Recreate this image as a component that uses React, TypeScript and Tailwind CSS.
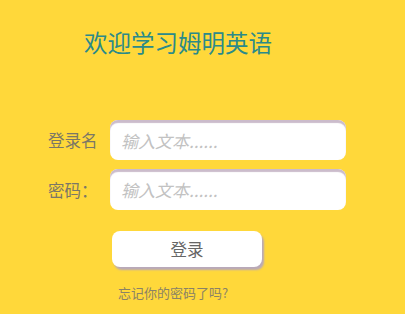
import React from 'react';

const font = { fontFamily: '"Noto Sans CJK SC", "Noto Sans", sans-serif' };

const inputCls =
  'w-[236px] shrink-0 rounded-[8px] bg-white pl-[11px] text-[17px] italic text-[#555] outline-none shadow-[inset_0_3px_1px_#cbbccb] placeholder:text-[#c2c2c2]';

export default function App() {
  return (
    <div className="h-[314px] w-[405px] overflow-hidden bg-[#ffd83a]" style={font}>
      <h1 className="pl-[84px] pt-[27px] text-[23.5px] leading-[30px] text-[#2b8a8a]">欢迎学习姆明英语</h1>
      <div className="mt-[63px] flex flex-col gap-[9px]">
        <div className="flex flex-row items-center">
          <span className="w-[110px] shrink-0 pl-[48px] text-[16.5px] leading-[20px] text-[#7b7766] whitespace-nowrap">登录名</span>
          <input placeholder="输入文本......" className={'h-[40px] ' + inputCls} />
        </div>
        <div className="flex flex-row items-center">
          <span className="w-[110px] shrink-0 pl-[48px] text-[16.5px] leading-[20px] text-[#7b7766] whitespace-nowrap">密码：</span>
          <input placeholder="输入文本......" className={'h-[41px] ' + inputCls} />
        </div>
      </div>
      <button className="ml-[112px] mt-[21px] flex h-[36px] w-[150px] items-center justify-center rounded-[8px] bg-white text-[16.5px] text-[#666] shadow-[2px_3px_2px_#b9a9b9]">
        登录
      </button>
      <p className="ml-[118px] mt-[18px] text-[13px] leading-[16px] text-[#8a8266]">忘记你的密码了吗?</p>
    </div>
  );
}
